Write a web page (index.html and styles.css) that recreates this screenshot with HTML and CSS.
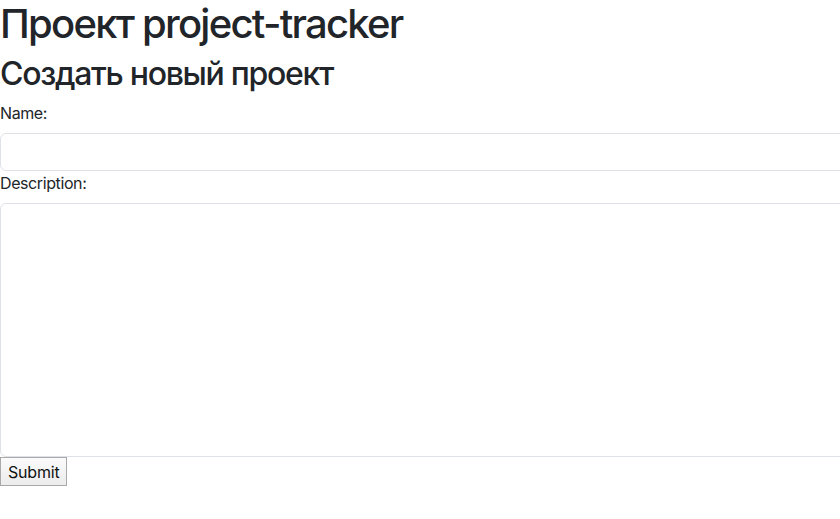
FILE: index.html
```html
<!DOCTYPE html>
<html lang="ru">
<head>
<meta charset="utf-8">
<title>Проект project-tracker</title>
<link rel="stylesheet" href="styles.css">
</head>
<body>
<h1 class="title">Проект project-tracker</h1>
<h2 class="subtitle">Создать новый проект</h2>
<form class="form">
  <label class="label" for="name">Name:</label>
  <input class="control" id="name" type="text">
  <label class="label" for="desc">Description:</label>
  <textarea class="control area" id="desc"></textarea>
  <button class="submit" type="button">Submit</button>
</form>
</body>
</html>
```
FILE: styles.css
```css
* { box-sizing: border-box; }
html, body { margin: 0; padding: 0; overflow: hidden; }
body {
  font-family: Inter, "Noto Sans", "Liberation Sans", sans-serif;
  font-size: 16px;
  line-height: 1.5;
  color: #212529;
  background: #fff;
}
.title {
  margin: 0 0 7px;
  font-size: 40px;
  font-weight: 500;
  line-height: 1.2;
  letter-spacing: -1.75px;
}
.subtitle {
  margin: 0 0 8px;
  font-size: 32px;
  font-weight: 500;
  line-height: 1.2;
  letter-spacing: -1.3px;
}
.form {
  display: flex;
  flex-direction: column;
  align-items: flex-start;
}
.label {
  display: block;
  margin-bottom: 8px;
  font-size: 16px;
  line-height: 24px;
  letter-spacing: -0.4px;
}
.control {
  display: block;
  width: calc(100% + 40px);
  height: 38px;
  padding: 6px 12px;
  font: inherit;
  color: #212529;
  background: #fff;
  border: 1px solid #dee2e6;
  border-radius: 6px;
  outline: none;
}
.area {
  height: 254px;
  resize: none;
}
.submit {
  font-family: Inter, "Noto Sans", sans-serif;
  font-size: 16px;
  line-height: 24px;
  letter-spacing: -0.2px;
  padding: 2px 7px 1px;
  color: #111;
  background: linear-gradient(#fbfbfb, #ececec);
  border: 1px solid #a9a9a9;
  border-radius: 0;
}
```
